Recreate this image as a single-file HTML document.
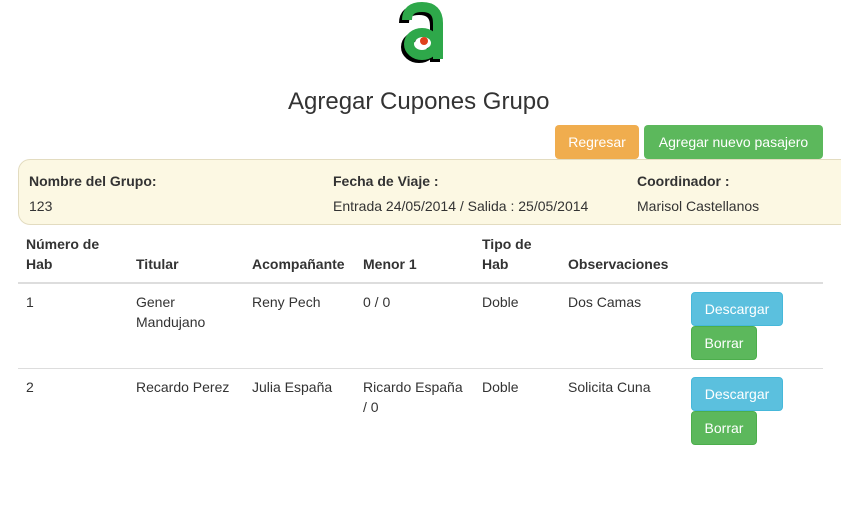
<!DOCTYPE html>
<html><head><meta charset="utf-8"><style>
body{margin:0;width:841px;height:517px;background:#fff;font-family:"Liberation Sans",sans-serif;font-size:14px;color:#333;position:relative;overflow:hidden}
.a{position:absolute;white-space:nowrap;line-height:20px}
.b{font-weight:bold}
.btn{position:absolute;border-radius:4px;color:#fff;font-size:14px;text-align:center;box-sizing:border-box}
</style></head><body>
<svg class="a" style="left:392px;top:0" width="60" height="70" viewBox="0 0 60 70">
<g transform="translate(-3,3)" stroke="#000" fill="none" stroke-width="10">
<path d="M15 20 Q15 7 30 7 Q46 7 46 23 L46 59"/>
<ellipse cx="30" cy="44" rx="13" ry="11"/>
</g>
<g stroke="#2ea84a" fill="none" stroke-width="10">
<path d="M15 20 Q15 7 30 7 Q46 7 46 23 L46 59"/>
<ellipse cx="30" cy="44" rx="13" ry="11"/>
</g>
<ellipse cx="31" cy="43" rx="8" ry="6" fill="#fff"/>
<circle cx="32" cy="41" r="4" fill="#e0401c"/>
</svg>
<div class="a" style="left:288px;top:88px;font-size:24px;line-height:28px;color:#333">Agregar Cupones Grupo</div>
<div class="btn" style="left:555px;top:125px;width:84px;height:34px;line-height:34px;background:#f0ad4e">Regresar</div>
<div class="btn" style="left:644px;top:125px;width:179px;height:34px;line-height:34px;background:#5cb85c">Agregar nuevo pasajero</div>
<div class="a" style="left:18px;top:159px;width:840px;height:66px;background:#fcf8e3;border:1px solid #e3dcc0;border-radius:12px;box-sizing:border-box"></div>
<div class="a b" style="left:29px;top:171px">Nombre del Grupo:</div>
<div class="a" style="left:29px;top:196px">123</div>
<div class="a b" style="left:333px;top:171px">Fecha de Viaje :</div>
<div class="a" style="left:333px;top:196px">Entrada 24/05/2014 / Salida : 25/05/2014</div>
<div class="a b" style="left:637px;top:171px">Coordinador :</div>
<div class="a" style="left:637px;top:196px">Marisol Castellanos</div>
<div class="a b" style="left:26px;top:234px">Número de<br>Hab</div>
<div class="a b" style="left:136px;top:254px">Titular</div>
<div class="a b" style="left:252px;top:254px">Acompañante</div>
<div class="a b" style="left:363px;top:254px">Menor 1</div>
<div class="a b" style="left:482px;top:234px">Tipo de<br>Hab</div>
<div class="a b" style="left:568px;top:254px">Observaciones</div>
<div class="a" style="left:18px;top:282px;width:805px;height:2px;background:#ddd"></div>
<div class="a" style="left:26px;top:292px">1</div>
<div class="a" style="left:136px;top:292px">Gener<br>Mandujano</div>
<div class="a" style="left:252px;top:292px">Reny Pech</div>
<div class="a" style="left:363px;top:292px">0 / 0</div>
<div class="a" style="left:482px;top:292px">Doble</div>
<div class="a" style="left:568px;top:292px">Dos Camas</div>
<div class="btn" style="left:691px;top:292px;width:92px;height:34px;line-height:32px;background:#5bc0de;border:1px solid #46b8da">Descargar</div>
<div class="btn" style="left:691px;top:326px;width:66px;height:34px;line-height:32px;background:#5cb85c;border:1px solid #4cae4c">Borrar</div>
<div class="a" style="left:18px;top:368px;width:805px;height:1px;background:#ddd"></div>
<div class="a" style="left:26px;top:377px">2</div>
<div class="a" style="left:136px;top:377px">Recardo Perez</div>
<div class="a" style="left:252px;top:377px">Julia España</div>
<div class="a" style="left:363px;top:377px">Ricardo España<br>/ 0</div>
<div class="a" style="left:482px;top:377px">Doble</div>
<div class="a" style="left:568px;top:377px">Solicita Cuna</div>
<div class="btn" style="left:691px;top:377px;width:92px;height:34px;line-height:32px;background:#5bc0de;border:1px solid #46b8da">Descargar</div>
<div class="btn" style="left:691px;top:411px;width:66px;height:34px;line-height:32px;background:#5cb85c;border:1px solid #4cae4c">Borrar</div>
</body></html>
